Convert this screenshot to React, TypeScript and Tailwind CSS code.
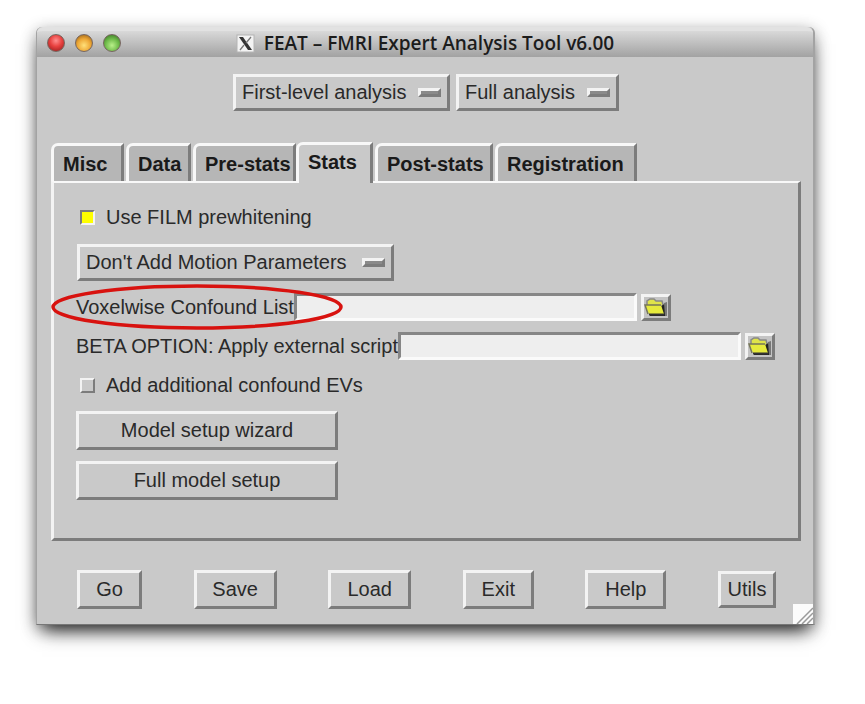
import { useState } from "react";
import type { ReactNode } from "react";

const raised = "border-[3px] border-t-[#f3f3f3] border-l-[#f3f3f3] border-r-[#7c7c7c] border-b-[#7c7c7c]";

function OptionMenu({ label, value, className }: { label: string; value: string; className: string }) {
  return (
    <div className={`grid h-[37px] items-center ${className}`}>
      <select
        aria-label={label}
        className={`col-start-1 row-start-1 h-full w-full appearance-none bg-[#c9c9c9] pb-[2px] pl-[6px] pr-10 outline-none ${raised}`}
      >
        <option>{value}</option>
      </select>
      <span
        aria-hidden="true"
        className={`pointer-events-none col-start-1 row-start-1 mr-[9px] h-[9px] w-[23px] justify-self-end bg-[#8a8a8a] ${raised}`}
      />
    </div>
  );
}

function PushButton({ children, className }: { children: ReactNode; className: string }) {
  return (
    <button type="button" className={`flex items-center justify-center bg-[#c9c9c9] pb-[2px] ${raised} ${className}`}>
      {children}
    </button>
  );
}

function FolderButton({ label }: { label: string }) {
  return (
    <button
      type="button"
      aria-label={label}
      className={`ml-1 flex h-[27px] w-[30px] shrink-0 items-center justify-center bg-[#c4c4c4] ${raised}`}
    >
      <svg width="24" height="21" viewBox="0 0 24 21" aria-hidden="true">
        <path d="M17 9l4-3v13H6v-2h12z" fill="#222" />
        <path d="M20 6l3-1v14h-2z" fill="#777" />
        <path d="M3 10V4l3-2h4l2 2h6l1 4" fill="#dfe34a" stroke="#888" strokeWidth="1.500" />
        <path d="M1 8h16l3 9H5z" fill="#e6ea3c" />
        <path d="M4 17L1 8h16" fill="none" stroke="#77775a" strokeWidth="1.500" />
        <path d="M5 17.500h15" stroke="#333" strokeWidth="2" />
      </svg>
    </button>
  );
}

function FileRow({ id, label, children }: { id: string; label: string; children?: ReactNode }) {
  return (
    <div className="relative flex h-[28px] items-center">
      <label htmlFor={id} className="whitespace-nowrap">{label}</label>
      <input
        id={id}
        type="text"
        className="h-full w-[343px] min-w-0 border-[3px] border-t-[#868686] border-r-[#fafafa] border-b-[#fafafa] border-l-[#868686] bg-[#eeeeee] px-1 outline-none"
      />
      <FolderButton label={`Browse: ${label}`} />
      {children}
    </div>
  );
}

function CheckRow({ id, label, initial }: { id: string; label: string; initial: boolean }) {
  const [on, setOn] = useState(initial);
  return (
    <div className="flex h-6 items-center gap-[11px] pl-1">
      <input
        id={id}
        type="checkbox"
        checked={on}
        onChange={() => setOn(!on)}
        className="h-[15px] w-[15px] appearance-none border-2 border-t-[#f3f3f3] border-r-[#7c7c7c] border-b-[#7c7c7c] border-l-[#f3f3f3] bg-[#c9c9c9] checked:border-t-[#7c7c7c] checked:border-r-[#f3f3f3] checked:border-b-[#f3f3f3] checked:border-l-[#7c7c7c] checked:bg-[#ffff00]"
      />
      <label htmlFor={id}>{label}</label>
    </div>
  );
}

const tabs = [
  { name: "Misc", width: "w-[73px]" },
  { name: "Data", width: "w-[65px]" },
  { name: "Pre-stats", width: "w-[103px]" },
  { name: "Stats", width: "w-[77px]" },
  { name: "Post-stats", width: "w-[118px]" },
  { name: "Registration", width: "w-[142px]" },
];

const lights = [
  { name: "Close", tone: "bg-[radial-gradient(circle_at_50%_35%,#ff8f8f_0%,#e8413f_45%,#8d1a1a_100%)]" },
  { name: "Minimize", tone: "bg-[radial-gradient(circle_at_50%_65%,#ffe07a_0%,#eda735_50%,#8a5410_100%)]" },
  { name: "Zoom", tone: "bg-[radial-gradient(circle_at_50%_65%,#b9f08a_0%,#6fbb4a_50%,#2f6a1c_100%)]" },
];

export default function App() {
  return (
    <div className="min-h-screen bg-white pt-[27px] pr-[50px] pb-[70px] pl-9 font-['Liberation_Sans',Arial,sans-serif] text-[20px] leading-6 text-[#2a2a2a]">
      <main className="relative rounded-t-[6px] border-r-2 border-b border-l border-[#a3a3a3] border-b-[#777777] bg-[#c9c9c9] shadow-[0_11px_18px_-6px_rgba(0,0,0,0.85),0_3px_16px_rgba(0,0,0,0.3)]">
        <header className="grid h-[30px] grid-cols-[1fr_auto_1fr] items-center rounded-t-[6px] border-t-4 border-[#e2e2e2] bg-linear-to-b from-[#d9d9d9] to-[#a2a2a2] px-[10px] pb-[2px]">
          <div className="flex gap-[10px]">
            {lights.map((l) => (
              <button key={l.name} type="button" aria-label={l.name} className={`h-[18px] w-[18px] rounded-full border border-[#77665f] ${l.tone}`} />
            ))}
          </div>
          <div className="flex items-center gap-[9px]">
            <svg width="19" height="19" viewBox="0 0 19 19" aria-hidden="true">
              <rect x="1" y="1" width="17" height="17" fill="#f3f3f3" stroke="#b4b4b4" />
              <path d="M3 3h4l9 13h-4z" fill="#333" />
              <path d="M15 3l-5 6M8 11l-4 5" stroke="#777" strokeWidth="1.300" />
            </svg>
            <h1 className="font-['Open_Sans','Noto_Sans',sans-serif] text-[19px] font-semibold whitespace-nowrap text-[#1c1c1c]">
              FEAT – FMRI Expert Analysis Tool v6.00
            </h1>
          </div>
          <span />
        </header>

        <div className="pt-[17px] pr-3 pb-[15px] pl-[14px]">
          <div className="flex justify-center gap-[6px]">
            <OptionMenu label="Analysis level" value="First-level analysis" className="w-[217px]" />
            <OptionMenu label="Analysis stages" value="Full analysis" className="w-[163px]" />
          </div>

          <div role="tablist" className="mt-[31px] -mb-[2px] flex items-end gap-[2px]">
            {tabs.map((t) => {
              const active = t.name === "Stats";
              return (
                <button
                  key={t.name}
                  type="button"
                  role="tab"
                  aria-selected={active}
                  className={`flex items-start rounded-tl-[7px] border-t-[3px] border-r-[3px] border-l-[3px] border-t-[#f8f8f8] border-r-[#7c7c7c] border-l-[#f8f8f8] pl-[9px] font-bold whitespace-nowrap text-[#1a1a1a] ${t.width} ${
                    active ? "relative -ml-[2px] h-[41px] bg-[#c9c9c9] pt-[5px]" : "mb-[2px] h-[38px] bg-[#b6b6b6] pt-[6px]"
                  }`}
                >
                  {t.name}
                </button>
              );
            })}
          </div>

          <section
            role="tabpanel"
            aria-label="Stats"
            className="flex flex-col items-start border-t-2 border-r-[3px] border-b-[3px] border-l-[3px] border-t-[#f8f8f8] border-r-[#7c7c7c] border-b-[#7c7c7c] border-l-[#f3f3f3] pt-[22px] pb-[38px] pl-[22px]"
          >
            <CheckRow id="film" label="Use FILM prewhitening" initial={true} />
            <div className="mt-[15px] mb-[12px] pl-[1px]">
              <OptionMenu label="Motion parameters" value="Don't Add Motion Parameters" className="w-[317px]" />
            </div>
            <FileRow id="voxelwise" label="Voxelwise Confound List">
              <svg
                className="pointer-events-none absolute -top-[10px] -left-[26px]"
                width="294"
                height="48"
                viewBox="0 0 294 48"
                aria-hidden="true"
              >
                <ellipse cx="147" cy="24" rx="144" ry="21" fill="none" stroke="#d8120f" strokeWidth="3.500" />
              </svg>
            </FileRow>
            <div className="mt-[11px] mb-[13px]">
              <FileRow id="script" label="BETA OPTION: Apply external script" />
            </div>
            <CheckRow id="evs" label="Add additional confound EVs" initial={false} />
            <PushButton className="mt-[14px] h-[39px] w-[262px]">Model setup wizard</PushButton>
            <PushButton className="mt-[11px] h-[39px] w-[262px]">Full model setup</PushButton>
          </section>

          <footer className="mt-[29px] flex items-center justify-between pr-[25px] pl-[26px]">
            <PushButton className="h-[39px] w-[65px]">Go</PushButton>
            <PushButton className="h-[39px] w-[83px]">Save</PushButton>
            <PushButton className="h-[39px] w-[83px]">Load</PushButton>
            <PushButton className="h-[39px] w-[71px]">Exit</PushButton>
            <PushButton className="h-[39px] w-[81px]">Help</PushButton>
            <PushButton className="h-[37px] w-[58px]">Utils</PushButton>
          </footer>
        </div>

        <svg className="absolute right-0 bottom-0" width="20" height="20" viewBox="0 0 20 20" aria-hidden="true">
          <rect width="20" height="20" fill="#fbfbfb" />
          <path d="M4 20L20 4M9 20L20 9M14 20L20 14" stroke="#9a9a9a" strokeWidth="1.500" />
        </svg>
      </main>
    </div>
  );
}
